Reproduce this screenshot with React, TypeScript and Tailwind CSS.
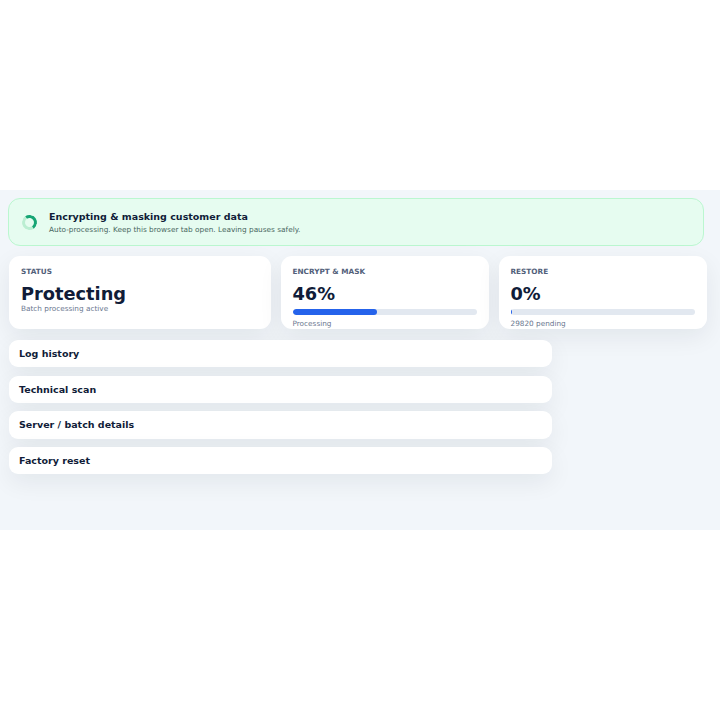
export default function App() {
  const rows = ["Log history", "Technical scan", "Server / batch details", "Factory reset"];
  return (
    <div className="h-[720px] bg-white pt-[190px] font-['DejaVu_Sans',sans-serif]">
      <div className="h-[340px] overflow-hidden bg-[#f2f6fa] pt-2 pl-[8px]">
        {/* processing banner */}
        <div className="flex h-[48px] w-[696px] items-center gap-[12px] rounded-[12px] border border-[#bbf7d0] bg-[#e6fcf0] px-[13px]">
          <div className="h-[15px] w-[15px] shrink-0 rotate-[10deg] rounded-full border-[3px] border-[#bbeed2] border-t-[#16a574] border-r-[#16a574]" />
          <div>
            <p className="text-[9.5px] leading-[13px] font-bold text-[#101c38]">Encrypting &amp; masking customer data</p>
            <p className="mt-[2px] text-[7.33px] leading-[10px] text-[#47665e]">Auto-processing. Keep this browser tab open. Leaving pauses safely.</p>
          </div>
        </div>

        {/* stat cards */}
        <div className="mt-[10px] ml-px grid w-[698px] grid-cols-[262px_208.5px_208px] gap-x-[9.5px]">
          <div className="h-[73px] overflow-hidden rounded-[11px] bg-white px-3 pt-[11px] shadow-[0_8px_24px_rgba(15,23,42,0.07)]">
            <p className="text-[7.3px] leading-[10px] font-semibold text-[#52607a]">STATUS</p>
            <p className="mt-[6px] text-[17.8px] leading-[22px] font-bold text-[#101c38]">Protecting</p>
            <p className="mt-[-1px] text-[7.3px] leading-[10px] text-[#6b7890]">Batch processing active</p>
          </div>
          <div className="h-[73px] overflow-hidden rounded-[11px] bg-white px-3 pt-[11px] shadow-[0_8px_24px_rgba(15,23,42,0.07)]">
            <p className="text-[7.3px] leading-[10px] font-semibold text-[#52607a]">ENCRYPT &amp; MASK</p>
            <p className="mt-[6px] text-[17.8px] leading-[22px] font-bold text-[#101c38]">46%</p>
            <div className="mt-[4px] h-[5.5px] overflow-hidden rounded-full bg-[#e2e8f0]">
              <div className="h-full w-[46%] rounded-full bg-[#2563eb]" />
            </div>
            <p className="mt-[4px] text-[7.3px] leading-[10px] text-[#6b7890]">Processing</p>
          </div>
          <div className="h-[73px] overflow-hidden rounded-[11px] bg-white px-3 pt-[11px] shadow-[0_8px_24px_rgba(15,23,42,0.07)]">
            <p className="text-[7.3px] leading-[10px] font-semibold text-[#52607a]">RESTORE</p>
            <p className="mt-[6px] text-[17.8px] leading-[22px] font-bold text-[#101c38]">0%</p>
            <div className="mt-[4px] h-[5.5px] overflow-hidden rounded-full bg-[#e2e8f0]">
              <div className="h-full w-px bg-[#2563eb]" />
            </div>
            <p className="mt-[4px] text-[7.3px] leading-[10px] text-[#6b7890]">29820 pending</p>
          </div>
        </div>

        {/* collapsed sections */}
        <div className="mt-[11px] ml-px flex w-[543px] flex-col gap-[8.4px]">
          {rows.map((r) => (
            <div key={r} className="flex h-[27.3px] items-center rounded-[9px] bg-white px-[10px] pt-px text-[9.5px] font-bold text-[#101c38] shadow-[0_8px_24px_rgba(15,23,42,0.07)]">
              {r}
            </div>
          ))}
        </div>
      </div>
    </div>
  );
}
